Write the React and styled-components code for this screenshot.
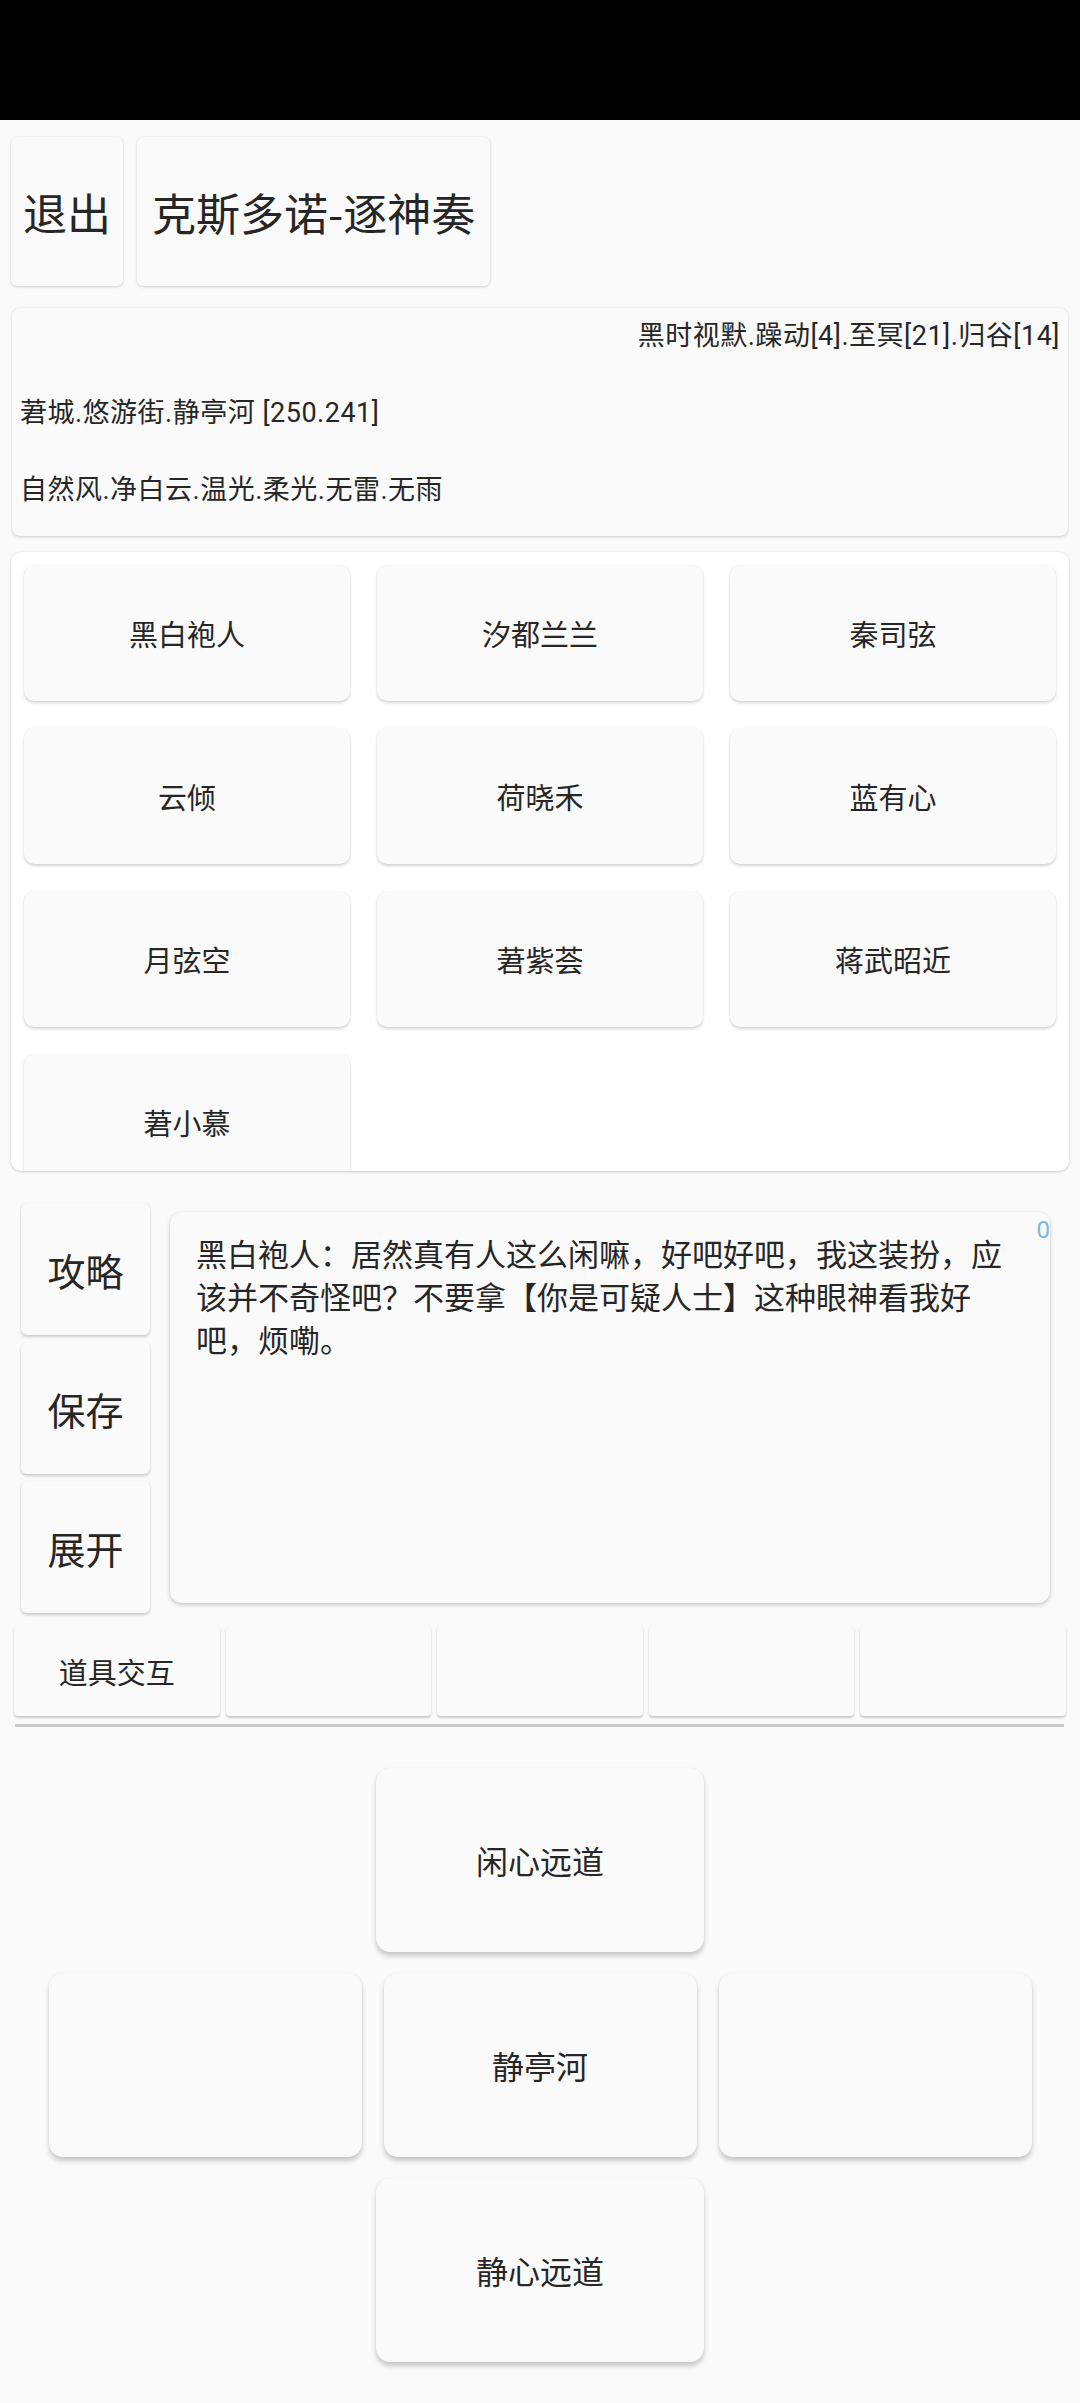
import React from "react";
import styled, { createGlobalStyle } from "styled-components";

const GlobalStyle = createGlobalStyle`
  body {
    margin: 0;
    background: #fafafa;
    font-family: Roboto, "Noto Sans CJK SC", "Noto Sans", sans-serif;
    color: #262626;
  }
`;

const characters = ["黑白袍人", "汐都兰兰", "秦司弦", "云倾", "荷晓禾", "蓝有心", "月弦空", "莙紫荟", "蒋武昭近", "莙小慕"];
const items = ["道具交互", "", "", "", ""];

const App = () => {
  return (
    <Page>
      <GlobalStyle />
      <StatusBar />
      <TopRow>
        <TopButton>退出</TopButton>
        <TopButton $wide>克斯多诺-逐神奏</TopButton>
      </TopRow>

      <InfoCard>
        <InfoLine $right>黑时视默.躁动[4].至冥[21].归谷[14]</InfoLine>
        <InfoLine>莙城.悠游街.静亭河 [250.241]</InfoLine>
        <InfoLine>自然风.净白云.温光.柔光.无雷.无雨</InfoLine>
      </InfoCard>

      <PeopleCard>
        <PeopleGrid>
          {characters.map((name) => (
            <PersonButton key={name}>{name}</PersonButton>
          ))}
        </PeopleGrid>
      </PeopleCard>

      <DialogRow>
        <SideColumn>
          <SideButton>攻略</SideButton>
          <SideButton>保存</SideButton>
          <SideButton>展开</SideButton>
        </SideColumn>
        <DialogBox>
          黑白袍人：居然真有人这么闲嘛，好吧好吧，我这装扮，应该并不奇怪吧？不要拿【你是可疑人士】这种眼神看我好吧，烦嘞。
          <Counter>0</Counter>
        </DialogBox>
      </DialogRow>

      <ItemRow>
        {items.map((item, i) => (
          <ItemButton key={i}>{item}</ItemButton>
        ))}
      </ItemRow>
      <Divider />

      <Pad>
        <PadButton $wide>闲心远道</PadButton>
        <PadRow>
          <PadButton />
          <PadButton>静亭河</PadButton>
          <PadButton />
        </PadRow>
        <PadButton $wide>静心远道</PadButton>
      </Pad>
    </Page>
  );
};

const Page = styled.div`
  width: 1080px;
  min-height: 2403px;
  background: #fafafa;
  padding-bottom: 38px;
  box-sizing: border-box;
`;

const StatusBar = styled.div`
  height: 120px;
  background: #000;
`;

const TopRow = styled.div`
  display: flex;
  gap: 14px;
  padding: 17px 0 0 11px;
`;

const TopButton = styled.div`
  height: 149px;
  padding: 0 ${(p) => (p.$wide ? "15px" : "12px")};
  display: flex;
  align-items: center;
  font-family: "Noto Sans CJK SC", sans-serif;
  font-size: 44px;
  background: #fafafa;
  border-radius: 6px;
  box-shadow: 0 1px 3px rgba(0, 0, 0, 0.16), 0 0 1px rgba(0, 0, 0, 0.08);
`;

const InfoCard = styled.div`
  margin: 22px 12px 0;
  padding: 10px 8px 28px;
  display: flex;
  flex-direction: column;
  gap: 41px;
  background: #fafafa;
  border-radius: 8px;
  box-shadow: 0 1px 3px rgba(0, 0, 0, 0.18), 0 0 1px rgba(0, 0, 0, 0.08);
`;

const InfoLine = styled.div`
  font-size: 27px;
  letter-spacing: 0.5px;
  line-height: 36px;
  white-space: nowrap;
  text-align: ${(p) => (p.$right ? "right" : "left")};
`;

const PeopleCard = styled.div`
  margin: 16px 11px 0;
  height: 619px;
  padding: 13px 13px 0;
  box-sizing: border-box;
  overflow: hidden;
  background: #fff;
  border-radius: 10px;
  box-shadow: 0 1px 3px rgba(0, 0, 0, 0.18), 0 0 1px rgba(0, 0, 0, 0.08);
`;

const PeopleGrid = styled.div`
  display: grid;
  grid-template-columns: repeat(3, 1fr);
  grid-auto-rows: 136px;
  gap: 27px;
`;

const PersonButton = styled.div`
  display: flex;
  align-items: center;
  justify-content: center;
  font-size: 29px;
  background: #fafafa;
  border-radius: 10px;
  box-shadow: 0 2px 3px rgba(0, 0, 0, 0.16), 0 0 1px rgba(0, 0, 0, 0.1);
`;

const DialogRow = styled.div`
  display: flex;
  gap: 20px;
  padding-left: 21px;
  margin-top: 32px;
`;

const SideColumn = styled.div`
  display: flex;
  flex-direction: column;
  gap: 7px;
  width: 129px;
`;

const SideButton = styled.div`
  height: 132px;
  display: flex;
  align-items: center;
  justify-content: center;
  font-size: 38px;
  background: #fafafa;
  border-radius: 6px;
  box-shadow: 0 2px 3px rgba(0, 0, 0, 0.18), 0 0 1px rgba(0, 0, 0, 0.1);
`;

const DialogBox = styled.div`
  position: relative;
  margin-top: 9px;
  width: 880px;
  height: 391px;
  padding: 22px 26px;
  box-sizing: border-box;
  font-size: 31px;
  line-height: 43px;
  background: #fafafa;
  border-radius: 12px;
  box-shadow: 0 2px 4px rgba(0, 0, 0, 0.2), 0 0 1px rgba(0, 0, 0, 0.1);
`;

const Counter = styled.span`
  position: absolute;
  top: 4px;
  right: 0;
  font-size: 24px;
  line-height: 28px;
  color: #7ab8e0;
`;

const ItemRow = styled.div`
  display: flex;
  gap: 6px;
  padding: 0 14px;
  margin-top: 13px;
`;

const ItemButton = styled.div`
  flex: 1;
  height: 90px;
  display: flex;
  align-items: center;
  justify-content: center;
  font-size: 29px;
  background: #fafafa;
  border-radius: 4px;
  box-shadow: 0 2px 2px rgba(0, 0, 0, 0.18), 0 0 1px rgba(0, 0, 0, 0.1);
`;

const Divider = styled.div`
  height: 3px;
  margin: 8px 16px 0 15px;
  background: #c8c8c8;
`;

const Pad = styled.div`
  display: flex;
  flex-direction: column;
  align-items: center;
  gap: 21px;
  margin-top: 41px;
`;

const PadRow = styled.div`
  display: flex;
  gap: 22px;
`;

const PadButton = styled.div`
  width: ${(p) => (p.$wide ? "328px" : "313px")};
  height: 184px;
  display: flex;
  align-items: center;
  justify-content: center;
  font-size: 32px;
  background: #fafafa;
  border-radius: 14px;
  box-shadow: 0 4px 5px rgba(0, 0, 0, 0.2), 0 0 1px rgba(0, 0, 0, 0.1);
`;

export default App;
